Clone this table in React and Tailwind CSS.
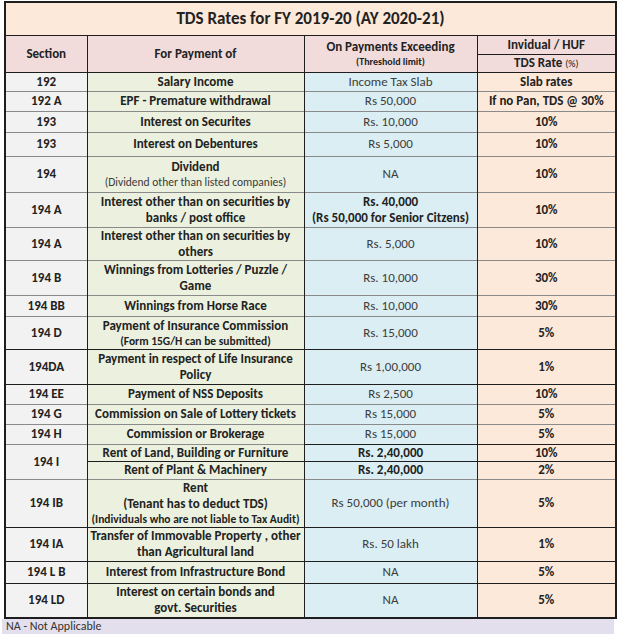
const DARK = 'border-t-[#1e1e1e]';
const GRAY = 'border-t-[#8a8a8a]';

const rows = [
  { h: 'h-[19px]', line: DARK, sec: '192', pay: ['Salary Income'], exc: ['Income Tax Slab'], rate: 'Slab rates' },
  { h: 'h-[20px]', line: GRAY, sec: '192 A', pay: ['EPF - Premature withdrawal'], exc: ['Rs 50,000'], rate: 'If no Pan, TDS @ 30%' },
  { h: 'h-[21px]', line: GRAY, sec: '193', pay: ['Interest on Securites'], exc: ['Rs. 10,000'], rate: '10%' },
  { h: 'h-[24px]', line: GRAY, sec: '193', pay: ['Interest on Debentures'], exc: ['Rs 5,000'], rate: '10%' },
  { h: 'h-[36px]', line: GRAY, sec: '194', pay: ['Dividend'], sub: '(Dividend other than listed companies)', exc: ['NA'], rate: '10%' },
  { h: 'h-[35px]', line: GRAY, sec: '194 A', pay: ['Interest other than on securities by', 'banks / post office'], exc: ['Rs. 40,000', '(Rs 50,000 for Senior Citzens)'], excBold: true, rate: '10%' },
  { h: 'h-[31px]', line: GRAY, sec: '194 A', pay: ['Interest other than on securities by', 'others'], exc: ['Rs. 5,000'], rate: '10%' },
  { h: 'h-[35px]', line: GRAY, sec: '194 B', pay: ['Winnings from Lotteries / Puzzle /', 'Game'], exc: ['Rs. 10,000'], rate: '30%' },
  { h: 'h-[21px]', line: GRAY, sec: '194 BB', pay: ['Winnings from Horse Race'], exc: ['Rs. 10,000'], rate: '30%' },
  { h: 'h-[33px]', line: GRAY, sec: '194 D', pay: ['Payment of Insurance Commission'], subBold: '(Form 15G/H can be submitted)', exc: ['Rs. 15,000'], rate: '5%' },
  { h: 'h-[35px]', line: DARK, sec: '194DA', pay: ['Payment in respect of Life Insurance', 'Policy'], exc: ['Rs 1,00,000'], rate: '1%' },
  { h: 'h-[20px]', line: DARK, sec: '194 EE', pay: ['Payment of NSS Deposits'], exc: ['Rs 2,500'], rate: '10%' },
  { h: 'h-[20px]', line: GRAY, sec: '194 G', pay: ['Commission on Sale of Lottery tickets'], exc: ['Rs 15,000'], rate: '5%' },
  { h: 'h-[20px]', line: GRAY, sec: '194 H', pay: ['Commission or Brokerage'], exc: ['Rs 15,000'], rate: '5%' },
];

const rowsAfter = [
  { h: 'h-[48px]', line: GRAY, sec: '194 IB', pay: ['Rent', '(Tenant has to deduct TDS)'], subBold: '(Individuals who are not liable to Tax Audit)', exc: ['Rs 50,000 (per month)'], rate: '5%' },
  { h: 'h-[34px]', line: DARK, sec: '194 IA', pay: ['Transfer of Immovable Property , other', 'than Agricultural land'], exc: ['Rs. 50 lakh'], rate: '1%' },
  { h: 'h-[22px]', line: DARK, sec: '194 L B', pay: ['Interest from Infrastructure Bond'], exc: ['NA'], rate: '5%' },
  { h: 'h-[35px]', line: DARK, sec: '194 LD', pay: ['Interest on certain bonds and', 'govt. Securities'], exc: ['NA'], rate: '5%' },
];

const cell = 'border-x border-x-[#1e1e1e] border-t text-center align-middle p-0 leading-[16px]';

const Row = ({ r }) => (
  <tr className={r.h}>
    <td className={`${cell} ${r.line} bg-[#f2f2f2] font-bold`}>{r.sec}</td>
    <td className={`${cell} ${r.line} bg-[#ebf1de] font-bold`}>
      {r.pay.map((t) => (
        <div key={t}>{t}</div>
      ))}
      {r.sub && <div className="font-normal text-[11.5px] leading-[14px] text-[#3a3a3a]">{r.sub}</div>}
      {r.subBold && <div className="text-[11.5px] leading-[14px]">{r.subBold}</div>}
    </td>
    <td className={`${cell} ${r.line} bg-[#daeef3] ${r.excBold ? 'font-bold' : 'text-[#3d3d3d]'}`}>
      {r.exc.map((t) => (
        <div key={t}>{t}</div>
      ))}
    </td>
    <td className={`${cell} ${r.line} bg-[#fde9d9] font-bold`}>{r.rate}</td>
  </tr>
);

export default function App() {
  return (
    <div
      className="w-[620px] h-[640px] bg-white pt-[1px] pl-[4px] text-[13px] text-[#222]"
      style={{ fontFamily: 'Carlito, Calibri, Lato, sans-serif' }}
    >
      <table className="table-fixed border-collapse w-[611px] border-2 border-[#1e1e1e]">
        <colgroup>
          <col className="w-[82px]" />
          <col className="w-[217px]" />
          <col className="w-[173px]" />
          <col className="w-[139px]" />
        </colgroup>
        <tbody>
          <tr className="h-[33px]">
            <td colSpan={4} className="bg-[#fde9d9] text-center align-middle p-0 text-[17px] font-bold">
              TDS Rates for FY 2019-20 (AY 2020-21)
            </td>
          </tr>
          <tr className="h-[19px]">
            <td rowSpan={2} className={`${cell} border-t-[#1e1e1e] bg-[#f2dcdb] font-bold`}>Section</td>
            <td rowSpan={2} className={`${cell} border-t-[#1e1e1e] bg-[#f2dcdb] font-bold`}>For Payment of</td>
            <td rowSpan={2} className={`${cell} border-t-[#1e1e1e] bg-[#f2dcdb] font-bold`}>
              <div>On Payments Exceeding</div>
              <div className="text-[10px] leading-[14px]">(Threshold limit)</div>
            </td>
            <td className={`${cell} border-t-[#1e1e1e] bg-[#f2dcdb] font-bold`}>Invidual / HUF</td>
          </tr>
          <tr className="h-[18px]">
            <td className={`${cell} border-t-[#1e1e1e] bg-[#f2dcdb] font-bold`}>
              TDS Rate <span className="text-[10px] font-normal">(%)</span>
            </td>
          </tr>
          {rows.map((r, i) => (
            <Row key={i} r={r} />
          ))}
          <tr className="h-[17px]">
            <td rowSpan={2} className={`${cell} ${GRAY} bg-[#f2f2f2] font-bold`}>194 I</td>
            <td className={`${cell} ${GRAY} bg-[#ebf1de] font-bold`}>Rent of Land, Building or Furniture</td>
            <td className={`${cell} ${DARK} bg-[#daeef3] font-bold`}>Rs. 2,40,000</td>
            <td className={`${cell} ${DARK} bg-[#fde9d9] font-bold`}>10%</td>
          </tr>
          <tr className="h-[18px]">
            <td className={`${cell} ${DARK} bg-[#ebf1de] font-bold`}>Rent of Plant &amp; Machinery</td>
            <td className={`${cell} ${DARK} bg-[#daeef3] font-bold`}>Rs. 2,40,000</td>
            <td className={`${cell} ${DARK} bg-[#fde9d9] font-bold`}>2%</td>
          </tr>
          {rowsAfter.map((r, i) => (
            <Row key={i} r={r} />
          ))}
        </tbody>
      </table>
      <div className="w-[612px] -ml-[2px] h-[15px] bg-[#e4dfec] text-[12px] leading-[15px] pl-[4px] text-[#333]">
        NA - Not Applicable
      </div>
    </div>
  );
}
